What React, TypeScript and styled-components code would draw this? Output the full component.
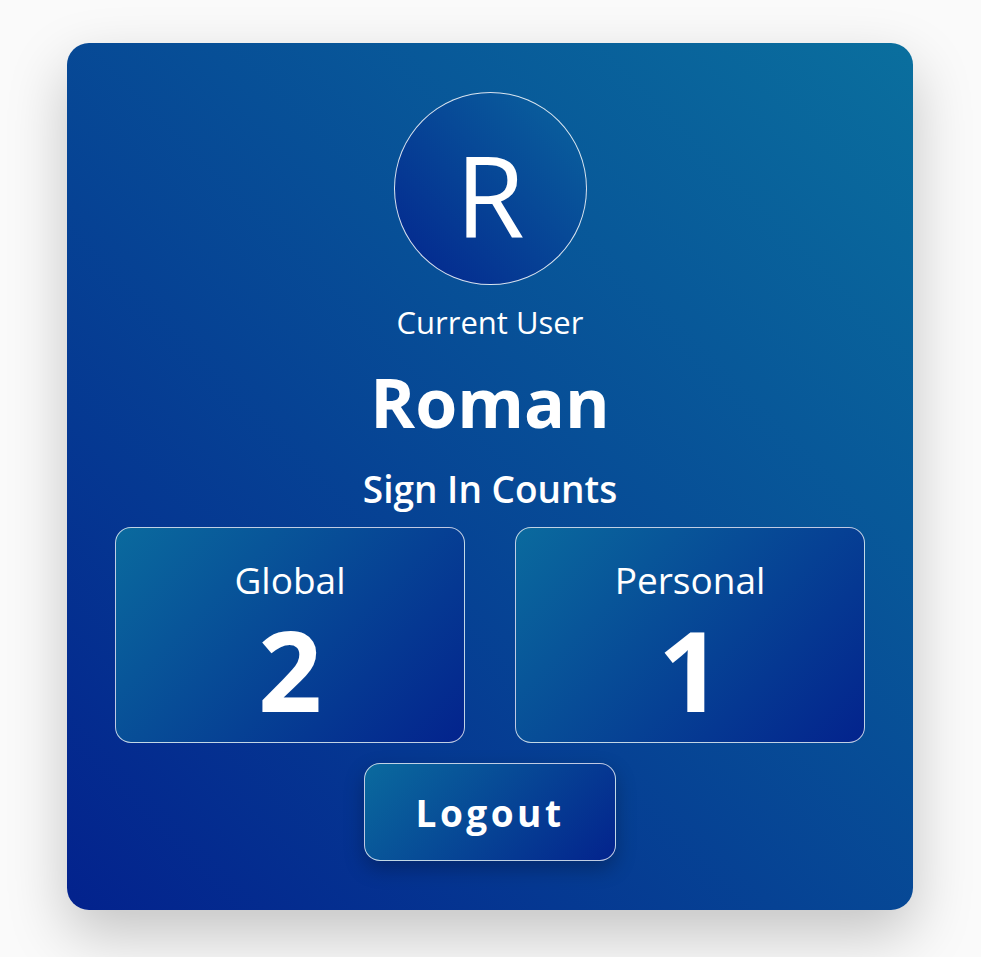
import styled, { createGlobalStyle } from "styled-components"

const GlobalStyle = createGlobalStyle`
  html, body {
    margin: 0;
    padding: 0;
    background: #fafafa;
    font-family: "Open Sans", "Noto Sans", sans-serif;
  }
`

const Page = styled.main`
  display: flex;
  justify-content: center;
  padding-top: 43px;
  padding-right: 1px;
  min-height: 957px;
  box-sizing: border-box;
`

const Card = styled.section`
  width: 846px;
  height: 867px;
  box-sizing: border-box;
  padding: 49px 48px 0;
  border-radius: 22px;
  background: linear-gradient(45deg, #03228d 0%, #0a6f9e 100%);
  box-shadow: 0 24px 60px rgba(0, 0, 0, 0.22);
  display: flex;
  flex-direction: column;
  align-items: center;
  color: #fff;
`

const Avatar = styled.div`
  width: 193px;
  height: 193px;
  box-sizing: border-box;
  border-radius: 50%;
  border: 1px solid rgba(255, 255, 255, 0.85);
  background: linear-gradient(45deg, #03248e 0%, #0a659e 100%);
  display: flex;
  align-items: center;
  justify-content: center;
  font-size: 112px;
  font-weight: 400;
  line-height: 1;
  padding-top: 10px;
`

const Caption = styled.div`
  margin-top: 16px;
  font-size: 31px;
  line-height: 42px;
`

const Name = styled.h1`
  margin: 20px 0 0;
  font-size: 68px;
  font-weight: 700;
  line-height: 78px;
`

const SectionTitle = styled.h2`
  margin: 24px 0 0;
  font-size: 37px;
  font-weight: 600;
  line-height: 48px;
`

const Stats = styled.div`
  margin-top: 14px;
  width: 100%;
  display: grid;
  grid-template-columns: 1fr 1fr;
  gap: 50px;
`

const StatBox = styled.div`
  height: 216px;
  box-sizing: border-box;
  border: 1px solid rgba(255, 255, 255, 0.75);
  border-radius: 16px;
  background: linear-gradient(135deg, #0a6a9e 0%, #03238d 100%);
  display: flex;
  flex-direction: column;
  align-items: center;
  padding-top: 26px;
`

const StatLabel = styled.div`
  font-size: 37px;
  font-weight: 400;
  line-height: 52px;
`

const StatValue = styled.div`
  margin-top: 4px;
  font-size: 112px;
  font-weight: 700;
  line-height: 118px;
`

const LogoutButton = styled.button`
  margin-top: 20px;
  width: 252px;
  height: 98px;
  border: 1px solid rgba(255, 255, 255, 0.75);
  border-radius: 16px;
  background: linear-gradient(135deg, #0a6a9e 0%, #03238d 100%);
  box-shadow: 0 8px 20px rgba(0, 0, 0, 0.25);
  color: #fff;
  font-family: inherit;
  font-size: 37px;
  font-weight: 700;
  letter-spacing: 3.5px;
  cursor: pointer;
`

export default function App() {
  return (
    <>
      <GlobalStyle />
      <Page>
        <Card>
          <Avatar>R</Avatar>
          <Caption>Current User</Caption>
          <Name>Roman</Name>
          <SectionTitle>Sign In Counts</SectionTitle>
          <Stats>
            <StatBox>
              <StatLabel>Global</StatLabel>
              <StatValue>2</StatValue>
            </StatBox>
            <StatBox>
              <StatLabel>Personal</StatLabel>
              <StatValue>1</StatValue>
            </StatBox>
          </Stats>
          <LogoutButton>Logout</LogoutButton>
        </Card>
      </Page>
    </>
  )
}
